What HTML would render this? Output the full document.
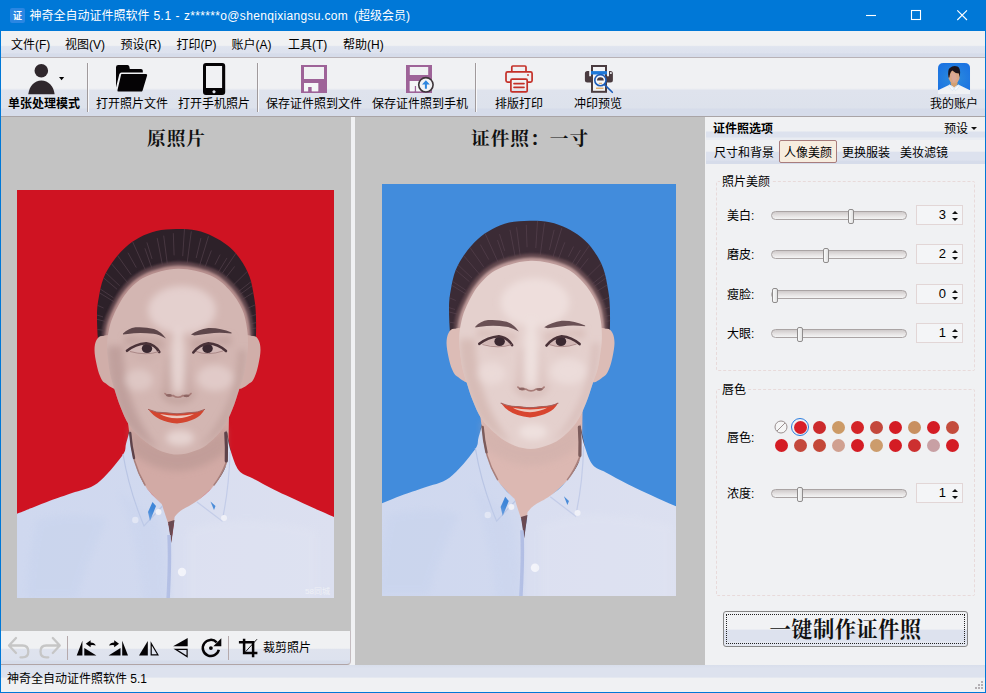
<!DOCTYPE html>
<html lang="zh-CN">
<head>
<meta charset="utf-8">
<title>神奇全自动证件照软件 5.1</title>
<style>
*{box-sizing:border-box;margin:0;padding:0}
html,body{width:986px;height:693px;overflow:hidden;background:#f0f1f3}
body{font-family:"Liberation Sans","Noto Sans CJK SC",sans-serif;font-size:12px;color:#000;position:relative}
.abs{position:absolute}
#win{position:absolute;left:0;top:0;width:986px;height:693px;background:#f0f1f3;border:1px solid #0078d7;border-top:0}
#title{position:absolute;left:0;top:0;width:986px;height:31px;background:#0078d7;color:#fff}
#title .txt{position:absolute;left:29.5px;top:7px;font-size:12px;white-space:nowrap;line-height:18px}
#menubar{position:absolute;left:1px;top:31px;width:984px;height:27px;background:linear-gradient(#f0f1f3 0,#f0f1f3 55%,#dfe4ef 60%,#dde2ee 84%,#d6dcea 88%,#d6dcea 100%);border-bottom:1px solid #b8b2b6}
#menubar span{position:absolute;top:6px;line-height:17px;white-space:nowrap}
#toolbar{position:absolute;left:1px;top:58px;width:984px;height:59px;background:linear-gradient(#f0f1f3 0,#f0f1f3 52%,#dfe3ed 56%,#dde2ec 86%,#d6dcea 88%,#d6dcea 100%);border-bottom:1px solid #a9a4a6}
.tl{position:absolute;top:38px;line-height:17px;white-space:nowrap;text-align:center}
.sep{position:absolute;top:5px;width:2px;height:49px;background:linear-gradient(90deg,#a09a9c 50%,#f8f8fa 50%)}
.panel{position:absolute;background:#c3c3c3}
.hd{position:absolute;font-family:"Liberation Serif","Noto Serif CJK SC",serif;font-weight:700;font-size:18.7px;letter-spacing:1px;white-space:nowrap;line-height:24px;color:#111}
#right{position:absolute;left:706px;top:117px;width:279px;height:548px;background:#f0f1f3}
.lbl{position:absolute;white-space:nowrap;line-height:16px}
.gb{position:absolute;border:1px dashed #e8dada;border-radius:2px}
.gb>b{position:absolute;left:3px;top:-8px;background:#f0f1f3;padding:0 2px;font-weight:normal;line-height:16px}
.track{position:absolute;height:9px;margin-top:-1px;border:1px solid #aaa4a4;border-radius:5px;background:linear-gradient(#cfcaca,#e4e1e1 50%,#f4f4f4)}
.thumb{position:absolute;width:6px;height:15px;border:1px solid #8f8c8c;border-radius:2px;background:linear-gradient(90deg,#fafafa,#e2e2e2)}
.spin{position:absolute;width:47px;height:20px;border:1px solid #e2d6d6;background:#f4f5f7}
.spin i{position:absolute;right:16px;top:0;font-style:normal;line-height:18px;font-size:13px}
.spin:before{content:"";position:absolute;right:4px;top:4.5px;border:3px solid transparent;border-top:0;border-bottom:3.5px solid #111}
.spin:after{content:"";position:absolute;right:4px;top:11.5px;border:3px solid transparent;border-bottom:0;border-top:3.5px solid #111}
.dot{position:absolute;width:13px;height:13px;border-radius:50%}
</style>
</head>
<body>
<div id="win">
</div>
<div id="title">
  <svg class="abs" style="left:10px;top:8px" width="15" height="15" viewBox="0 0 15 15"><rect width="15" height="15" rx="2" fill="#2a86e2"/><text x="7.5" y="11" font-size="9" font-weight="bold" fill="#fff" text-anchor="middle" font-family="Liberation Sans,Noto Sans CJK SC,sans-serif">证</text></svg>
  <div class="txt"><span id="t1">神奇全自动证件照软件</span><span id="t2" style="letter-spacing:0.55px"> 5.1 - </span><span id="t3" style="letter-spacing:0.327px">z******o@shenqixiangsu.com</span><span id="t4" style="margin-left:2.5px"> (超级会员)</span></div>
  <svg class="abs" style="left:848px;top:0" width="138" height="31" viewBox="0 0 138 31" fill="none" stroke="#fff" stroke-width="1.1">
    <path d="M18 15.500h10"/><rect x="63.500" y="10.500" width="9" height="9"/><path d="M109.300 10.300l9.700 9.700M119 10.300l-9.700 9.700"/>
  </svg>
</div>
<div id="menubar">
  <span style="left:10px">文件(F)</span><span style="left:64px">视图(V)</span><span style="left:119.5px">预设(R)</span><span style="left:175.5px">打印(P)</span><span style="left:230.500px">账户(A)</span><span style="left:287px">工具(T)</span><span style="left:342px">帮助(H)</span>
</div>
<div id="toolbar">
  <div class="sep" style="left:86px"></div><div class="sep" style="left:256px"></div><div class="sep" style="left:474px"></div>
  <div class="tl" style="left:7px;font-weight:bold">单张处理模式</div>
  <div class="tl" style="left:95px">打开照片文件</div>
  <div class="tl" style="left:177px">打开手机照片</div>
  <div class="tl" style="left:265px">保存证件照到文件</div>
  <div class="tl" style="left:371px">保存证件照到手机</div>
  <div class="tl" style="left:494px">排版打印</div>
  <div class="tl" style="left:573px">冲印预览</div>
  <div class="tl" style="left:929px">我的账户</div>
  <!--ICONS-->
</div>
<svg class="abs" style="left:0;top:58px" width="986" height="59" viewBox="0 58 986 59">
  <!-- person -->
  <g fill="#2f272c"><circle cx="41.300" cy="70.800" r="6.800"/><path d="M28.300 94.200C29.300 86 34.500 80.500 41.400 80.500C48.300 80.500 53.600 86 54.600 94.200Z"/></g>
  <path d="M59 77h5.200l-2.600 3.200z" fill="#000"/>
  <!-- folder -->
  <g fill="#050305"><path d="M116 67.200Q116 65 118.200 65H127.500Q129 65 129.300 66.500L129.800 69H141Q142.800 69 142.800 70.800V72.600H121.500Q119.800 72.600 119.300 74.200L116 87.500Z"/><path d="M121.600 74.100H146Q147.600 74.100 147.100 75.600L142.600 90.400Q142.200 91.600 140.800 91.600H118.500Q117 91.600 117.500 90.100L121 75Q121.200 74.100 121.600 74.100Z"/></g>
  <!-- phone -->
  <path fill-rule="evenodd" fill="#050305" d="M206 63H222.200Q225.200 63 225.200 66V92Q225.200 95 222.200 95H206Q203 95 203 92V66Q203 63 206 63ZM206 65.900V88.100H222.100V65.900ZM214 90.200A1.600 1.600 0 1 0 214.010 90.200Z"/>
  <!-- save -->
  <path fill-rule="evenodd" fill="#9e6398" d="M301 65H327V93H301ZM304 67.100V79H324V67.100ZM304 83V91.200H308.100V87.100H311.800V91.200H318.200V83Z"/>
  <path fill="#f5f6f8" d="M304 83H318.200V91.200H311.800V87.100H308.100V91.200H304Z"/>
  <!-- save to phone -->
  <path fill-rule="evenodd" fill="#9e6398" d="M406 65H432V93H406ZM409.800 67.100V75H428.200V67.100ZM409.800 81.100V91.200H414.600V86H416.200V91.200H421V81.100Z"/>
  <path fill="#f5f6f8" d="M409.800 81.100H421V91.200H416.200V86H414.600V91.200H409.800Z"/>
  <circle cx="425.900" cy="84.800" r="7.200" fill="#f2f3f5" stroke="#3e363a" stroke-width="1.600"/>
  <path fill="#2e86de" d="M425.900 80.300L429.800 84.400H426.900V88.800H424.900V84.400H422Z"/>
  <!-- printer -->
  <g fill="none" stroke="#c43028" stroke-width="1.700" stroke-linejoin="round"><path d="M511.800 71V67Q511.800 66 512.800 66H525Q526 66 526 67V71"/><path d="M510.800 82.200H507.600Q506 82.200 506 80.600V73.500Q506 71.900 507.600 71.900H530.500Q532.100 71.900 532.100 73.500V80.600Q532.100 82.200 530.500 82.200H527.300"/><rect x="510.900" y="79.200" width="16.300" height="12.700" rx="1.200"/><path d="M514 83.600H524M514 87.300H524" stroke-linecap="round"/></g>
  <circle cx="528" cy="75" r="0.900" fill="#c43028"/>
  <!-- preview -->
  <rect x="592" y="66" width="14" height="25.800" fill="#f3f4f6" stroke="#4a3c40" stroke-width="2"/>
  <path fill="#4a3c40" d="M591 82.600H587.400Q584.900 82.600 584.900 80.100V73.600Q584.900 71.100 587.400 71.100H589.200V76.300H591ZM607 82.600H610.400Q612.900 82.600 612.900 80.100V73.600Q612.900 71.100 610.400 71.100H609V76.300H607Z"/>
  <rect x="591" y="71.100" width="16" height="3.400" fill="#1e78d8"/>
  <rect x="610" y="72.200" width="1.700" height="1.700" fill="#f3f4f6"/>
  <path d="M596 88.200h7.500" stroke="#d89038" stroke-width="1"/>
  <circle cx="600.400" cy="80.200" r="5.600" fill="#f6f7f9" stroke="#1c5cb8" stroke-width="1.600"/>
  <path d="M597 80.600Q597 77.200 600.400 77.200Q603.800 77.200 603.800 80.600Z" fill="#4a3c40"/>
  <path d="M598.800 83.300h3.200" stroke="#d89038" stroke-width="0.800"/>
  <path d="M604.500 84.600L612.300 92.300" stroke="#1c5cb8" stroke-width="1.600" stroke-linecap="round"/>
  <!-- avatar -->
  <defs><clipPath id="avc"><path d="M943.500 62.900H964.600Q970.100 62.900 970.100 68.400V94H938V68.400Q938 62.900 943.500 62.900Z"/></clipPath><radialGradient id="avg" cx="0.500" cy="0.550" r="0.600"><stop offset="0" stop-color="#2c8cdc"/><stop offset="1" stop-color="#1c74e2"/></radialGradient></defs>
  <g clip-path="url(#avc)"><rect x="938" y="62.900" width="32.100" height="27.500" fill="url(#avg)"/>
   <path d="M938 90.200L949.500 84.800L954.100 86L958.700 84.800L970.100 90.200V94H938Z" fill="#f0f2f5"/>
   <path d="M950.700 80H957.500V84.500L954.200 87.500L950.700 84.500Z" fill="#d2a070"/>
   <path d="M949.300 84.600L954.100 88.500L958.900 84.600L959.300 86.500L956 90.500L954.100 88.800L952.200 90.500L948.900 86.500Z" fill="#f7f9fb" stroke="#bcd4ea" stroke-width="0.400"/>
   <ellipse cx="954.100" cy="76" rx="5.700" ry="7.600" fill="#d9a684"/>
   <path d="M948.500 77.500Q947.300 70 949.800 68Q953 65.200 957.500 66.500Q960.600 68 960 74.500L959.600 77.500L958.900 73.500Q955 73.300 952.300 70.500Q950 72 949.400 77.500Z" fill="#1c141c"/>
   <path d="M951 72.500L955.500 74L957 79L953.500 82.500L951.500 78Z" fill="#dcaaa0" opacity="0.700"/>
  </g>
</svg>
<div class="panel" style="left:1px;top:117px;width:350px;height:514px"></div>
<div class="panel" style="left:355px;top:117px;width:350px;height:548px"></div>
<div class="hd" style="left:147px;top:127px">原照片</div>
<div class="hd" style="left:471px;top:127px">证件照：一寸</div>
<!--PHOTOS-->
<svg width="0" height="0" style="position:absolute"><defs>
<linearGradient id="shg" x1="0" x2="1" y1="0" y2="0"><stop offset="0" stop-color="#cfd8ef"/><stop offset="0.470" stop-color="#d1d9ef"/><stop offset="0.500" stop-color="#d9def0"/><stop offset="1" stop-color="#dce0f0"/></linearGradient>
<radialGradient id="hl" cx="0.5" cy="0.5" r="0.5"><stop offset="0" stop-color="#fff" stop-opacity="0.550"/><stop offset="0.700" stop-color="#fff" stop-opacity="0.350"/><stop offset="1" stop-color="#fff" stop-opacity="0"/></radialGradient>
<clipPath id="fclip"><path d="M90.0 156.0C89.9 160.8 90.4 165.0 91.0 170.0C91.6 175.0 92.3 180.8 93.5 186.0C94.7 191.2 96.3 195.8 98.0 201.0C99.7 206.2 101.1 211.3 103.5 217.0C105.9 222.7 108.3 229.6 112.5 235.4C116.7 241.2 123.2 247.5 128.6 251.8C134.0 256.2 139.6 259.4 145.0 261.5C150.4 263.6 155.6 264.6 160.8 264.6C166.0 264.6 171.1 263.1 176.0 261.5C180.9 259.9 185.0 258.5 190.0 254.7C195.0 250.9 201.6 244.5 205.8 238.6C210.0 232.7 212.7 225.7 215.4 219.3C218.1 212.9 220.1 205.7 222.0 200.0C223.9 194.3 225.8 190.0 227.0 185.0C228.2 180.0 228.8 174.8 229.5 170.0C230.2 165.2 230.9 161.3 231.0 156.0C231.1 150.7 231.0 144.5 230.0 138.3C229.0 132.1 228.0 125.4 225.0 119.0C222.0 112.6 217.5 105.3 212.2 99.7C206.9 94.1 201.6 88.7 193.0 85.2C184.4 81.7 171.5 78.5 160.8 78.8C150.1 79.1 137.2 82.8 128.6 86.8C120.0 90.8 114.6 96.6 109.3 103.0C104.0 109.4 99.5 119.0 96.5 125.4C93.5 131.8 92.7 136.4 91.6 141.5C90.5 146.6 90.1 151.2 90.0 156.0Z"/></clipPath><clipPath id="hclip"><path d="M86.0 176.0C84.2 175.2 82.5 163.5 81.5 155.0C80.5 146.5 79.9 133.1 80.0 125.0C80.1 117.0 80.8 112.8 81.9 106.7C83.0 100.6 84.1 94.2 86.4 88.4C88.7 82.6 91.9 77.2 95.6 72.0C99.2 66.8 103.8 61.5 108.3 57.4C112.8 53.3 117.7 50.0 122.9 47.3C128.1 44.6 133.3 42.4 139.4 41.0C145.5 39.6 152.7 39.2 159.4 39.1C166.1 39.0 173.4 39.4 179.5 40.6C185.6 41.8 190.8 43.9 196.0 46.4C201.2 48.9 206.0 51.8 210.6 55.6C215.2 59.4 219.7 64.0 223.3 69.2C227.0 74.4 230.2 80.3 232.5 86.6C234.8 92.8 235.9 100.3 237.0 106.7C238.1 113.1 238.7 117.0 238.9 125.0C239.2 133.1 239.2 146.5 238.5 155.0C237.8 163.5 236.4 175.2 235.0 176.0C233.6 176.8 242.5 169.3 230.0 160.0C217.5 150.7 183.0 120.0 160.0 120.0C137.0 120.0 104.3 150.7 92.0 160.0C79.7 169.3 87.8 176.8 86.0 176.0Z"/></clipPath>
<filter id="bl1"><feGaussianBlur stdDeviation="1.2"/></filter>
<filter id="bl2" x="-30%" y="-30%" width="160%" height="160%"><feGaussianBlur stdDeviation="3.500"/></filter>
<symbol id="lady" viewBox="0 0 317 408" overflow="visible">
 <path d="M110 225L212 225L211 275L196 297L180 312L162 334L150 334L144 314L128 297L116 272Z" style="fill:var(--neck)"/>
 <path d="M113 236Q160 283 209 236L209 262Q160 300 114 262Z" style="fill:var(--shade)" opacity="0.550" filter="url(#bl2)"/>
 <path d="M112 240L116 271L128 297L118 290L109 262Z" fill="#5a4048"/><path d="M209.500 240L210 274L197 297L207 288L214 262Z" fill="#5a4048"/>
 <path d="M86.0 176.0C84.2 175.2 82.5 163.5 81.5 155.0C80.5 146.5 79.9 133.1 80.0 125.0C80.1 117.0 80.8 112.8 81.9 106.7C83.0 100.6 84.1 94.2 86.4 88.4C88.7 82.6 91.9 77.2 95.6 72.0C99.2 66.8 103.8 61.5 108.3 57.4C112.8 53.3 117.7 50.0 122.9 47.3C128.1 44.6 133.3 42.4 139.4 41.0C145.5 39.6 152.7 39.2 159.4 39.1C166.1 39.0 173.4 39.4 179.5 40.6C185.6 41.8 190.8 43.9 196.0 46.4C201.2 48.9 206.0 51.8 210.6 55.6C215.2 59.4 219.7 64.0 223.3 69.2C227.0 74.4 230.2 80.3 232.5 86.6C234.8 92.8 235.9 100.3 237.0 106.7C238.1 113.1 238.7 117.0 238.9 125.0C239.2 133.1 239.2 146.5 238.5 155.0C237.8 163.5 236.4 175.2 235.0 176.0C233.6 176.8 242.5 169.3 230.0 160.0C217.5 150.7 183.0 120.0 160.0 120.0C137.0 120.0 104.3 150.7 92.0 160.0C79.7 169.3 87.8 176.8 86.0 176.0Z" style="fill:var(--hair)"/>
 <g clip-path="url(#hclip)"><g stroke="#584450" stroke-width="0.900" fill="none" opacity="0.700"><path d="M87.3 140.4L66.9 137.7M87.7 131.3L73.1 127.5M86.0 126.9L71.4 122.4M86.6 118.0L71.6 111.5M96.8 111.6L74.7 98.1M96.5 107.8L73.8 92.7M100.2 99.4L82.5 84.4M102.7 95.8L86.8 80.8M114.5 97.1L91.0 69.7M114.2 84.8L98.5 62.5M119.3 77.6L110.9 62.7M128.3 79.8L115.0 50.4M136.0 81.4L127.9 58.3M135.0 68.9L129.9 52.4M145.5 75.4L140.2 48.1M150.3 73.8L146.7 45.6M157.1 65.4L156.3 43.2M165.7 66.2L167.5 38.4M169.7 76.5L174.3 41.3M179.2 68.0L183.9 48.1M181.6 78.8L191.5 46.2M186.9 79.9L194.4 60.5M198.0 74.7L203.1 64.6M199.5 85.2L210.0 67.9M205.2 83.4L220.1 61.5M208.1 88.6L217.7 76.4M212.5 98.8L235.4 76.5M218.9 103.6L243.5 84.3M216.0 109.5L240.9 91.5M219.7 112.9L241.9 99.1M223.1 121.6L242.2 113.1M227.4 128.3L258.2 118.4M229.7 134.7L253.2 129.6M233.8 138.8L256.2 135.5"/></g><path d="M86.0 158.0C84.9 153.0 84.6 145.8 85.4 139.8C86.2 133.9 87.5 129.3 90.7 122.3C94.0 115.3 98.9 104.9 104.7 97.9C110.5 90.9 116.4 84.6 125.7 80.2C135.1 75.8 149.1 71.8 160.8 71.5C172.5 71.2 186.6 74.7 195.9 78.5C205.3 82.3 211.0 88.1 216.9 94.3C222.7 100.4 227.6 108.3 230.8 115.3C234.0 122.3 235.6 129.2 236.3 136.3C237.0 143.5 236.2 152.4 235.0 158.0C233.8 163.6 241.5 174.7 229.0 170.0C216.5 165.3 182.8 130.0 160.0 130.0C137.2 130.0 104.3 165.3 92.0 170.0C79.7 174.7 87.1 163.0 86.0 158.0Z" style="fill:var(--band1)" filter="url(#bl1)"/>
 <path d="M88.0 158.0C87.5 153.1 87.9 146.4 88.8 140.8C89.8 135.1 90.9 130.7 93.9 124.0C97.0 117.3 101.7 107.4 107.3 100.7C112.8 94.0 118.4 88.1 127.3 83.9C136.3 79.7 149.6 75.8 160.8 75.6C172.0 75.3 185.4 78.6 194.3 82.2C203.2 85.8 208.7 91.4 214.3 97.3C219.8 103.1 224.5 110.7 227.6 117.4C230.7 124.1 231.9 130.7 232.8 137.4C233.7 144.2 233.6 152.6 233.0 158.0C232.4 163.4 241.2 174.7 229.0 170.0C216.8 165.3 182.8 130.0 160.0 130.0C137.2 130.0 104.0 165.3 92.0 170.0C80.0 174.7 88.5 162.9 88.0 158.0Z" style="fill:var(--band2)" filter="url(#bl1)"/></g>
 <path d="M97.0 150.0C94.3 141.7 87.9 146.0 85.0 146.0C82.1 146.0 80.8 147.7 79.5 150.0C78.2 152.3 77.5 156.0 77.5 160.0C77.5 164.0 78.6 169.7 79.5 174.0C80.4 178.3 81.6 182.8 83.0 186.0C84.4 189.2 85.0 191.3 88.0 193.0C91.0 194.7 99.5 203.2 101.0 196.0C102.5 188.8 99.7 158.3 97.0 150.0Z" style="fill:var(--ear)"/><path d="M224.0 150.0C226.7 141.7 233.1 146.0 236.0 146.0C238.9 146.0 240.2 147.7 241.5 150.0C242.8 152.3 243.5 156.0 243.5 160.0C243.5 164.0 242.4 169.7 241.5 174.0C240.6 178.3 239.4 182.8 238.0 186.0C236.6 189.2 236.0 191.3 233.0 193.0C230.0 194.7 221.5 203.2 220.0 196.0C218.5 188.8 221.3 158.3 224.0 150.0Z" style="fill:var(--ear)"/>
 <path d="M90.0 156.0C89.9 160.8 90.4 165.0 91.0 170.0C91.6 175.0 92.3 180.8 93.5 186.0C94.7 191.2 96.3 195.8 98.0 201.0C99.7 206.2 101.1 211.3 103.5 217.0C105.9 222.7 108.3 229.6 112.5 235.4C116.7 241.2 123.2 247.5 128.6 251.8C134.0 256.2 139.6 259.4 145.0 261.5C150.4 263.6 155.6 264.6 160.8 264.6C166.0 264.6 171.1 263.1 176.0 261.5C180.9 259.9 185.0 258.5 190.0 254.7C195.0 250.9 201.6 244.5 205.8 238.6C210.0 232.7 212.7 225.7 215.4 219.3C218.1 212.9 220.1 205.7 222.0 200.0C223.9 194.3 225.8 190.0 227.0 185.0C228.2 180.0 228.8 174.8 229.5 170.0C230.2 165.2 230.9 161.3 231.0 156.0C231.1 150.7 231.0 144.5 230.0 138.3C229.0 132.1 228.0 125.4 225.0 119.0C222.0 112.6 217.5 105.3 212.2 99.7C206.9 94.1 201.6 88.7 193.0 85.2C184.4 81.7 171.5 78.5 160.8 78.8C150.1 79.1 137.2 82.8 128.6 86.8C120.0 90.8 114.6 96.6 109.3 103.0C104.0 109.4 99.5 119.0 96.5 125.4C93.5 131.8 92.7 136.4 91.6 141.5C90.5 146.6 90.1 151.2 90.0 156.0Z" style="fill:var(--skin)"/>
 <g clip-path="url(#fclip)"><g filter="url(#bl2)">
  <path d="M90 156Q90 200 110 236Q125 252 142 260Q122 235 113 205Q106 180 106 156Z" style="fill:var(--shade)" opacity="0.650"/>
  <path d="M229 160Q229 200 208 236Q198 250 182 258Q203 235 214 205Q221 180 221 160Z" style="fill:var(--shade)" opacity="0.500"/>
  <ellipse cx="165" cy="120" rx="34" ry="24" style="fill:var(--hi)" opacity="0.800"/>
  <ellipse cx="161" cy="170" rx="7" ry="34" style="fill:var(--hi)" opacity="0.900"/>
  <ellipse cx="122" cy="190" rx="14" ry="11" style="fill:var(--hi)" opacity="0.550"/>
  <ellipse cx="198" cy="188" rx="18" ry="13" style="fill:var(--hi)" opacity="0.650"/>
  <ellipse cx="163" cy="248" rx="14" ry="8" style="fill:var(--hi)" opacity="0.900"/>
  <path d="M142 200Q160 214 180 201Q176 214 161 214Q146 214 142 200Z" style="fill:var(--shade)" opacity="0.600"/>
  <path d="M108 146Q125 148 146 150L146 160Q125 150 108 156Z" style="fill:var(--shade)" opacity="0.550"/>
  <path d="M112 163Q128 170 144 163Q130 174 112 163Z" style="fill:var(--shade)" opacity="0.600"/>
  <path d="M178 163Q192 170 207 163Q192 174 178 163Z" style="fill:var(--shade)" opacity="0.600"/>
  <path d="M150 165Q148 190 146 203L152 206Q153 185 154 165Z" style="fill:var(--shade)" opacity="0.500"/>
  <path d="M171 165Q173 190 176 203L170 206Q169 185 168 165Z" style="fill:var(--shade)" opacity="0.400"/>
  <path d="M175 150Q196 148 214 146L214 156Q196 150 175 160Z" style="fill:var(--shade)" opacity="0.550"/>
 </g></g>
 <!-- brows -->
 <path d="M106 143.600Q111 138.500 118.500 137.300Q128 136.600 137 139Q144 141.500 149 148.500Q142 144.500 136.500 143.800Q126 142.500 117 143.200Q110 143.800 106 144.600Z" style="fill:var(--brow)"/>
 <path d="M174 144.500Q181 139.500 191.300 138Q203 137.500 214.500 142.600L214.500 143.500Q204 142.300 197 143Q186 144 177.500 145.500Z" style="fill:var(--brow)"/>
 <!-- eyes -->
 <path d="M111 160Q119 153.500 130 153.700Q138 154.500 142.500 160.500Q137 163.300 129 163.300Q119 163 111 160Z" fill="#d2b8b6"/>
 <path d="M178 160.500Q182 154.500 191 153.700Q201 153.500 207.500 159.500Q200 163 191 163.300Q183 163.300 178 160.500Z" fill="#d2b8b6"/>
 <ellipse cx="130" cy="158.400" rx="5.200" ry="4.600" fill="#3a2830"/><ellipse cx="190.600" cy="158.400" rx="5.200" ry="4.600" fill="#3a2830"/>
 <path d="M110 160.800Q118 154.300 129.200 153.300Q138 154.500 142.300 162" fill="none" stroke="#4a3238" stroke-width="2.600" stroke-linecap="round"/>
 <path d="M176.300 162.500Q182 155 191.300 153.300Q201 154 209 161" fill="none" stroke="#4a3238" stroke-width="2.600" stroke-linecap="round"/>
 <path d="M113 161.500Q129 166 142 161.500" fill="none" stroke="#a07c7c" stroke-width="0.800"/><path d="M179 161.500Q191 166 206 161" fill="none" stroke="#a07c7c" stroke-width="0.800"/>
 <!-- nose -->
 <path d="M148 203.500Q151 207.500 156 205.500Q161 209 166 205.500Q171 207.800 174 203.500" fill="none" stroke="#a87c78" stroke-width="1.600" stroke-linecap="round"/>
 <ellipse cx="152" cy="205.300" rx="3" ry="1.400" fill="#8e6664"/><ellipse cx="169.500" cy="205.800" rx="3" ry="1.400" fill="#8e6664"/>
 <!-- mouth -->
 <path d="M131.500 219.500Q139 223 148 222.500Q160 224.500 172 222.500Q181 222.500 187.500 219.500Q182 231 160 233.500Q140 232 131.500 219.500Z" style="fill:var(--lip)"/>
 <path d="M143 224Q160 227.500 177 224Q170 228 160 228.300Q149 228 143 224Z" fill="#ecc9bf"/>
 <path d="M131 219.300Q140 223.300 148 222.700Q160 225 172 222.700Q181 223 188 219.300" fill="none" stroke="#a4605c" stroke-width="1"/>
 <!-- shirt -->
 <path d="M112.5 241.5C111.9 243.6 110.2 249.9 109.0 254.0C107.8 258.1 109.8 259.5 105.0 266.0C100.2 272.5 88.7 287.0 80.4 293.2C72.1 299.4 63.0 300.0 55.0 303.0C47.0 306.0 41.4 307.5 32.2 311.0C23.0 314.5 5.4 321.7 0.0 323.8L0 426L317 426L317 327C312.5 325.0 300.0 319.6 290.0 315.0C280.0 310.4 266.4 304.2 257.2 299.7C248.0 295.2 240.9 291.2 235.0 288.0C229.1 284.8 225.4 284.7 221.9 280.4C218.4 276.1 216.2 268.5 214.0 262.0C211.8 255.5 209.8 244.9 209.0 241.5L209 245C209.1 249.8 211.7 265.4 209.5 274.0C207.3 282.6 200.9 290.3 196.0 296.5C191.1 302.7 185.3 307.0 180.0 311.0C174.7 315.0 167.7 317.9 164.0 320.6C160.3 323.3 158.7 325.9 157.6 327.0L156.5 336L154.3 351L152 336L144.7 314C142.0 311.1 133.1 303.7 128.6 296.5C124.0 289.3 119.8 279.3 117.4 270.7C115.0 262.1 114.6 249.3 114.0 245.0Z" fill="url(#shg)"/>
 <path d="M157.500 330L154.300 353L151 332Z" fill="#6a4a52"/>
 <path d="M113.200 243Q114.500 258 117.600 271Q121 283 128 295" fill="none" stroke="#a8807c" stroke-width="1.500" stroke-linecap="round"/><path d="M113.200 243Q114.200 256 117 268" fill="none" style="stroke:var(--collar)" stroke-width="2.400" stroke-linecap="round"/>
 <path d="M208.600 243Q209.600 258 209 273Q204 286 197 295" fill="none" stroke="#a8807c" stroke-width="1.500" stroke-linecap="round"/><path d="M208.800 243Q209.800 258 209.300 271" fill="none" style="stroke:var(--collar)" stroke-width="3.200" stroke-linecap="round"/>
 <path d="M152 345Q153.500 375 150 426" stroke="#b2bee4" stroke-width="3.500" fill="none"/>
 <path d="M106 264Q112 300 127 336L145.500 316" fill="none" stroke="#b9c5e4" stroke-width="1.200"/>
 <path d="M213 262Q212 300 205 331L180 312" fill="none" stroke="#c3cce8" stroke-width="1.200"/>
 <path d="M131 322L135.500 312L139 316L133 331Z" fill="#3f86d8"/>
 <path d="M193.500 311.500L197 320L198.500 316Z" fill="#4a8cd8"/>
 <circle cx="118.300" cy="330" r="3.200" fill="#f0f1f8"/><circle cx="141.500" cy="322" r="3" fill="#f0f1f8"/><circle cx="207" cy="328" r="3" fill="#f0f1f8"/><circle cx="165" cy="382" r="4.200" fill="#f3f4fa"/>
 <g filter="url(#bl2)" opacity="0.350"><path d="M20 330Q60 320 90 330Q70 370 60 408L10 408Q10 370 20 330Z" fill="#c3d0ec"/><path d="M100 300Q120 340 128 430L150 430Q150 360 140 330Z" fill="#c6d2ee"/><path d="M170 340Q220 320 300 340L300 430L170 430Z" fill="#e3e6f3"/></g>
</symbol></defs></svg>
<svg class="abs" style="left:17px;top:190px;--skin:#d3b6b2;--hi:#e8d6d4;--shade:#b59490;--neck:#d2aaa5;--ear:#d0aea9;--hair:#2d2129;--band1:#5e444c;--band2:#b58d8c;--brow:#5e464a;--lip:#d3452f;--collar:#5e434a" width="317" height="408" viewBox="0 0 317 408"><rect width="317" height="408" fill="#cf1322"/><use href="#lady" x="0" y="0" width="317" height="408"/><text x="288" y="404" font-size="8" fill="#eef0f6" font-family="Liberation Sans,Noto Sans CJK SC,sans-serif">58同城</text></svg>
<svg class="abs" style="left:382px;top:184px;--skin:#e4d0cd;--hi:#f0e2e0;--shade:#cfb0ab;--neck:#dcb8b2;--ear:#dcbcb6;--hair:#3b2b35;--band1:#63484f;--band2:#bd9a99;--brow:#6a5054;--lip:#d8452f;--collar:#7c5c5c" width="294" height="412" viewBox="0 0 294 412"><rect width="294" height="412" fill="#428cdc"/><g transform="translate(148 157) scale(1.012) translate(-160 -158)"><use href="#lady" x="0" y="0" width="317" height="408"/></g></svg>
<!--LEFTBAR-->
<div class="abs" style="left:1px;top:631px;width:350px;height:34px;background:linear-gradient(#f0f1f3 0,#f0f1f3 52%,#dfe3ee 56%,#dde2ee 88%,#d6dcea 91%,#d6dcea 100%);border-bottom:1px solid #b0a4a6;border-right:1px solid #c4bcc0;border-radius:0 0 4px 0">
  <div class="lbl" style="left:262px;top:9px">裁剪照片</div>
</div>
<svg class="abs" style="left:0;top:631px" width="351" height="34" viewBox="0 631 351 34">
  <g fill="none" stroke="#c6c6c6" stroke-width="2.300" stroke-linecap="round" stroke-linejoin="round">
    <path d="M16 638L9 645.500L16 653M9.500 645.500H22.500Q28.300 645.500 28.300 651.400Q28.300 657.300 22.500 657.300H20.500"/>
    <path d="M52.800 638L59.800 645.500L52.800 653M59.300 645.500H46.300Q40.500 645.500 40.500 651.400Q40.500 657.300 46.300 657.300H48.300"/>
  </g>
  <path d="M67.500 636V660M228.500 636V660" stroke="#b5a9ab" stroke-width="1"/>
  <g fill="#050305">
    <path d="M76.700 655.400H82.400V640.800ZM84.300 648V655.400H96.400Z"/>
    <path d="M85.800 643.800L90.600 640.300V642.600Q94.500 642.800 95.800 645.600Q93.500 644.800 90.600 645.200V647.300Z"/>
    <path d="M128 655.400H122.200V640.800ZM120.500 648V655.400H108.600Z"/>
    <path d="M119 643.800L114.200 640.300V642.600Q110.300 642.800 109 645.600Q111.300 644.800 114.200 645.200V647.300Z"/>
    <path d="M139 655.400H147.800V641Z"/>
    <path d="M173.100 646.300H187.700V638Z"/>
    <circle cx="210.900" cy="648.100" r="1.900"/>
    <path d="M221.300 638.200V646.200H213.300Z"/>
  </g>
  <g fill="none" stroke="#050305">
    <path d="M151.200 643.500V654.800H157.900Z" stroke-width="1.200"/>
    <path d="M175.600 649.300H187.100V656.600Z" stroke-width="1.200"/>
    <path d="M216.700 642.300A8.100 8.100 0 1 0 218.800 649.800" stroke-width="2.500"/>
    <path d="M238.900 642.200H253.100V657.200M244.100 638.700V653.100H257.400" stroke-width="2.500"/>
    <path d="M257 639.200L245.500 651.800" stroke-width="0.900"/>
  </g>
</svg>
<div id="right">
  <div class="abs" style="left:0;top:0;width:279px;height:23px;background:linear-gradient(#f0f1f3 0,#f0f1f3 60%,#dde2ee 66%,#dde2ee 86%,#e9ecf2 92%,#e9ecf2 100%)"></div>
  <div class="abs" style="left:0;top:23px;width:279px;height:24px;background:linear-gradient(#f0f1f3 0,#f0f1f3 46%,#dde2ee 52%,#dde2ee 84%,#d6dcea 88%,#d6dcea 100%)"></div>
  <div class="lbl" style="left:7px;top:4px;font-weight:bold">证件照选项</div>
  <div class="lbl" style="left:238px;top:4px">预设</div>
  <div class="abs" style="left:265px;top:10px;border:3px solid transparent;border-bottom:0;border-top:3px solid #111"></div>
  <div class="abs" style="left:73px;top:23px;width:58px;height:23px;border:1px solid #a87c7c;border-radius:2px;background:#f7eddf"></div>
  <div class="lbl" style="left:8px;top:28px">尺寸和背景</div>
  <div class="lbl" style="left:78px;top:28px">人像美颜</div>
  <div class="lbl" style="left:136px;top:28px">更换服装</div>
  <div class="lbl" style="left:194px;top:28px">美妆滤镜</div>

  <div class="gb" style="left:10px;top:64px;width:259px;height:190px"><b>照片美颜</b></div>
  <div class="lbl" style="left:21px;top:91px">美白:</div>
  <div class="track" style="left:65px;top:95px;width:136px"></div><div class="thumb" style="left:142px;top:92px"></div>
  <div class="spin" style="left:210px;top:88px"><i>3</i></div>
  <div class="lbl" style="left:21px;top:130px">磨皮:</div>
  <div class="track" style="left:65px;top:134px;width:136px"></div><div class="thumb" style="left:117px;top:131px"></div>
  <div class="spin" style="left:210px;top:127px"><i>2</i></div>
  <div class="lbl" style="left:21px;top:170px">瘦脸:</div>
  <div class="track" style="left:65px;top:174px;width:136px"></div><div class="thumb" style="left:66px;top:171px"></div>
  <div class="spin" style="left:210px;top:167px"><i>0</i></div>
  <div class="lbl" style="left:21px;top:209px">大眼:</div>
  <div class="track" style="left:65px;top:213px;width:136px"></div><div class="thumb" style="left:91px;top:210px"></div>
  <div class="spin" style="left:210px;top:206px"><i>1</i></div>

  <div class="gb" style="left:10px;top:272px;width:259px;height:207px"><b>唇色</b></div>
  <div class="lbl" style="left:21px;top:313px">唇色:</div>
  <svg class="abs" style="left:68px;top:303px" width="14" height="14" viewBox="0 0 14 14"><circle cx="7" cy="7" r="6" fill="#f6f6f6" stroke="#9a9090" stroke-width="1"/><path d="M3 11L11 3" stroke="#9a9090" stroke-width="1"/></svg><div class="dot" style="left:87.5px;top:303.5px;background:#d81e28"></div><div class="dot" style="left:106.5px;top:303.5px;background:#cc2a2c"></div><div class="dot" style="left:125.5px;top:303.5px;background:#cc9a66"></div><div class="dot" style="left:144.5px;top:303.5px;background:#d42428"></div><div class="dot" style="left:163.5px;top:303.5px;background:#c4483c"></div><div class="dot" style="left:182.5px;top:303.5px;background:#d41c24"></div><div class="dot" style="left:201.5px;top:303.5px;background:#c89060"></div><div class="dot" style="left:220.5px;top:303.5px;background:#d41c24"></div><div class="dot" style="left:239.5px;top:303.5px;background:#c44c3c"></div><div class="dot" style="left:68.5px;top:322.0px;background:#d41c24"></div><div class="dot" style="left:87.5px;top:322.0px;background:#c4483c"></div><div class="dot" style="left:106.5px;top:322.0px;background:#c44838"></div><div class="dot" style="left:125.5px;top:322.0px;background:#d0a090"></div><div class="dot" style="left:144.5px;top:322.0px;background:#d41c24"></div><div class="dot" style="left:163.5px;top:322.0px;background:#cc9c6c"></div><div class="dot" style="left:182.5px;top:322.0px;background:#d41c24"></div><div class="dot" style="left:201.5px;top:322.0px;background:#cc3030"></div><div class="dot" style="left:220.5px;top:322.0px;background:#c8a0a4"></div><div class="dot" style="left:239.5px;top:322.0px;background:#d41c24"></div><div class="abs" style="left:85px;top:301px;width:18px;height:18px;border-radius:50%;border:1.3px solid #2a7de0"></div>
  <div class="lbl" style="left:21px;top:369px">浓度:</div>
  <div class="track" style="left:65px;top:373px;width:136px"></div><div class="thumb" style="left:91px;top:370px"></div>
  <div class="spin" style="left:210px;top:366px"><i>1</i></div>

  <div class="abs" style="left:17px;top:494px;width:245px;height:36px;border:1px solid #868686;border-radius:3px;background:linear-gradient(#f1f2f4 0,#f1f2f4 50%,#dde2ee 54%,#dde2ee 84%,#e4e8f1 88%,#e4e8f1 100%)">
    <div class="abs" style="left:2px;top:2px;right:2px;bottom:2px;border:1px dotted #222"></div>
    <div class="hd" style="left:0;width:243px;top:6px;text-align:center;font-size:21.3px;letter-spacing:0.4px;font-weight:700">一键制作证件照</div>
  </div>
</div>
<!--STATUS-->
<div class="abs" style="left:1px;top:665px;width:984px;height:27px;background:linear-gradient(#d8deeb 0,#dde2ee 12%,#dde2ee 44%,#f0f1f3 50%,#f0f1f3 100%)">
  <svg class="abs" style="left:972px;top:15px" width="12" height="12" viewBox="0 0 12 12" fill="#b4b0b4"><rect x="8" y="1" width="2" height="2"/><rect x="5" y="4" width="2" height="2"/><rect x="8" y="4" width="2" height="2"/><rect x="2" y="7" width="2" height="2"/><rect x="5" y="7" width="2" height="2"/><rect x="8" y="7" width="2" height="2"/></svg>
  <div class="lbl" style="left:6px;top:6px">神奇全自动证件照软件 5.1</div>
</div>
</body>
</html>
